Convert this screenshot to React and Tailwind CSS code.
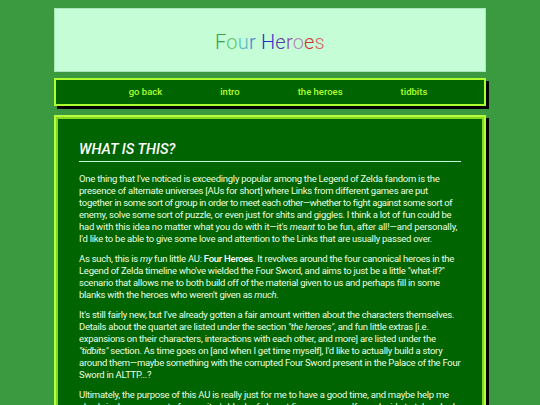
const title = [
  ["F", "#3aa14a"], ["o", "#62c46a"], ["u", "#5ab9c9"], ["r", "#3a86d6"], [" ", "#000"],
  ["H", "#2b2bcc"], ["e", "#5a3aaa"], ["r", "#8a4a9c"], ["o", "#b585b8"], ["e", "#cf3232"], ["s", "#da6464"],
];

const links = ["go back", "intro", "the heroes", "tidbits"];

export default function App() {
  return (
    <div className="min-h-[405px] bg-[#3b9a3f] pt-2 font-['Roboto',sans-serif]">
      <div className="mx-auto w-[432px]">
        <header className="flex h-[64px] items-center justify-center border border-[#a6e8b8] bg-[#c4fdd6]">
          <h1 className="mt-1 text-[20px] font-light tracking-[0.2px]">
            {title.map(([ch, c], i) => (
              <span key={i} style={{ color: c }}>{ch === " " ? "\u00a0" : ch}</span>
            ))}
          </h1>
        </header>

        <nav className="mt-[6px] flex h-[28px] items-center justify-center gap-[58px] border-2 border-[#adff2f] bg-[#006400] pl-4 text-[9.5px] font-medium text-[#adff2f] shadow-[3px_3px_0_#000]">
          {links.map((l) => (
            <a key={l} href="#">{l}</a>
          ))}
        </nav>

        <main className="mt-[9px] border-2 border-[#b6ff3c] bg-[#006400] px-[23px] pt-[24px] pb-6 text-[9.5px] leading-[12px] tracking-[-0.26px] text-[#eaffe4] shadow-[3px_3px_0_#000,inset_0_0_0_2px_#86d624]">
          <h2 className="border-b border-[#c4fdd6] pb-[2px] text-[14.5px] leading-[18px] font-medium italic uppercase tracking-normal text-white">
            What is this?
          </h2>
          <p className="mt-[11px]">
            One thing that I've noticed is exceedingly popular among the Legend of Zelda fandom is the presence of alternate universes [AUs for short] where Links from different games are put together <span className="tracking-[-0.38px]">in some sort of group in order to meet each other—whether to fight against some sort of</span> enemy, solve some sort of puzzle, or even just for shits and giggles. I think a lot of fun could be had <span className="tracking-[-0.17px]">with this idea no matter what you do with it—it's <em>meant</em> to be fun, after all!—and personally,</span> I'd like to be able to give some love and attention to the Links that are usually passed over.
          </p>
          <p className="mt-[8px]">
            As such, this is <em>my</em> fun little AU: <strong className="font-medium text-white">Four Heroes</strong>. It revolves around the four canonical heroes in the Legend of Zelda timeline who've wielded the Four Sword, and aims to just be a little "what-if?" scenario that allows me to both build off of the material given to us and perhaps fill in some blanks with the heroes who weren't given as <em>much</em>.
          </p>
          <p className="mt-[8px]">
            It's still fairly new, but I've already gotten a fair amount written about the characters themselves. Details about the quartet are listed under the section <em>"the heroes"</em>, and fun little extras [i.e. expansions on their characters, interactions with each other, and more] are listed under the <em>"tidbits"</em> section. As time goes on [and when I get time myself], I'd like to actually build a story around them—maybe something with the corrupted Four Sword present in the Palace of the Four Sword in ALTTP...?
          </p>
          <p className="mt-[8px]">
            Ultimately, the purpose of this AU is really just for me to have a good time, and maybe help me slowly inch my way out of my writer's block of almost five years now. If you decide to take a look around, I hope you enjoy what you find!
          </p>
        </main>
      </div>
    </div>
  );
}
